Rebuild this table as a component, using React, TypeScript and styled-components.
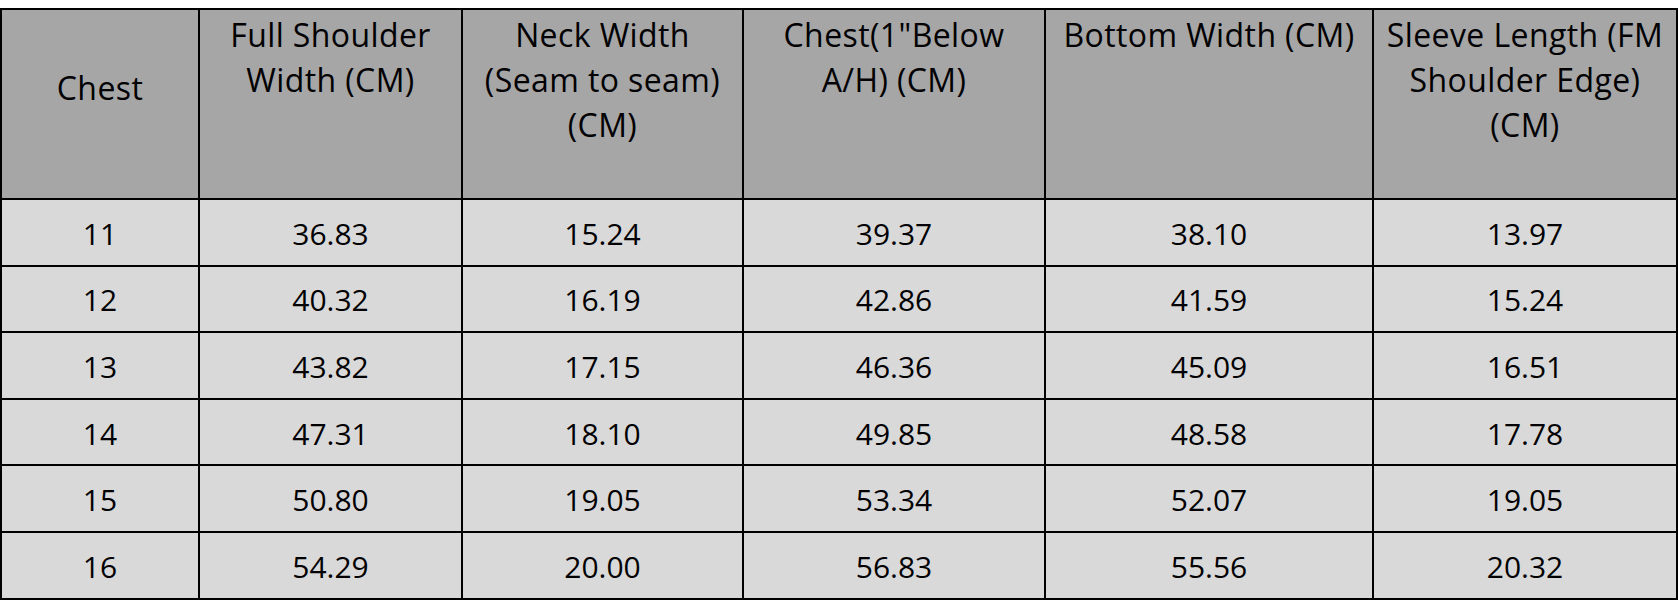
import styled, { createGlobalStyle } from 'styled-components';

const GlobalStyle = createGlobalStyle`
  body {
    margin: 0;
    padding-top: 8px;
    background: #ffffff;
    font-family: "Open Sans", Lato, "Liberation Sans", sans-serif;
  }
`;

const Table = styled.table`
  border-collapse: collapse;
  width: 1676px;
  table-layout: fixed;
  color: #000;
`;

const HeadRow = styled.tr`
  height: 190px;
`;

const BodyRow = styled.tr`
  height: 66.6px;
`;

const HeadCell = styled.th<{ $middle?: boolean }>`
  background: #a6a6a6;
  border: 2px solid #000;
  padding: ${(p) => (p.$middle ? '0 0 34px' : '2px 0 0')};
  font-size: 32px;
  letter-spacing: 0.4px;
  font-weight: 400;
  line-height: 45px;
  text-align: center;
  vertical-align: ${(p) => (p.$middle ? 'middle' : 'top')};
`;

const Cell = styled.td`
  background: #d9d9d9;
  border: 2px solid #000;
  padding: 3px 0 0;
  font-size: 30px;
  text-align: center;
  vertical-align: middle;
  line-height: 1;
`;

const widths = [198, 263, 281, 302, 328, 304];

const headLines: string[][] = [
  ['Chest'],
  ['Full Shoulder', 'Width (CM)'],
  ['Neck Width', '(Seam to seam)', '(CM)'],
  ['Chest(1"Below', 'A/H) (CM)'],
  ['Bottom Width (CM)'],
  ['Sleeve Length (FM', 'Shoulder Edge)', '(CM)'],
];

const rows = [
  ['11', '36.83', '15.24', '39.37', '38.10', '13.97'],
  ['12', '40.32', '16.19', '42.86', '41.59', '15.24'],
  ['13', '43.82', '17.15', '46.36', '45.09', '16.51'],
  ['14', '47.31', '18.10', '49.85', '48.58', '17.78'],
  ['15', '50.80', '19.05', '53.34', '52.07', '19.05'],
  ['16', '54.29', '20.00', '56.83', '55.56', '20.32'],
];

export default function App() {
  return (
    <>
      <GlobalStyle />
      <Table>
        <colgroup>
          {widths.map((w, i) => (
            <col key={i} style={{ width: w }} />
          ))}
        </colgroup>
        <thead>
          <HeadRow>
            {headLines.map((lines, i) => (
              <HeadCell key={i} $middle={i === 0}>
                {lines.map((l, j) => (
                  <div key={j}>{l}</div>
                ))}
              </HeadCell>
            ))}
          </HeadRow>
        </thead>
        <tbody>
          {rows.map((r) => (
            <BodyRow key={r[0]}>
              {r.map((v, i) => (
                <Cell key={i}>{v}</Cell>
              ))}
            </BodyRow>
          ))}
        </tbody>
      </Table>
    </>
  );
}
